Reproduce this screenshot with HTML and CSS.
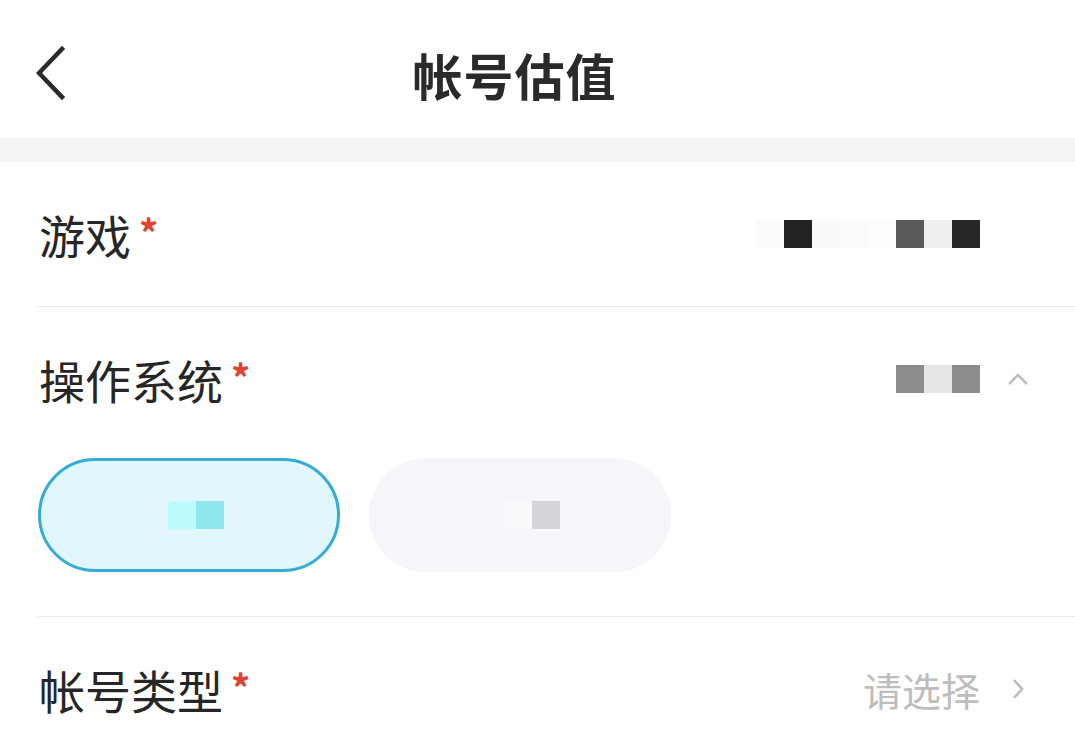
FILE: index.html
```html
<!DOCTYPE html>
<html lang="zh-CN">
<head>
    <meta name='viewport' content='width=device-width, initial-scale=1'>
    <link rel="stylesheet" href="styles.css">
    <title>帐号估值</title>
</head>
<body>
<header class="nav">
    <button class="navBack" aria-label="返回">
        <svg width="40" height="60" viewBox="0 0 40 60"><path d="M26 4 L3 28 L26 52" fill="none" stroke="#2b2b2b" stroke-width="4.5" stroke-linecap="square"/></svg>
    </button>
    <h1 class="navTitle">帐号估值</h1>
    <span></span>
</header>
<div class="band"></div>
<main>
    <section class="field">
        <div class="fieldRow">
            <span class="fieldLabel">游戏<i>*</i></span>
            <span class="fieldValue">
                <span class="mosaic">
                    <b style="background:#fbfbfb"></b><b style="background:#222"></b><b style="background:#fafafa"></b><b style="background:#fbfbfb"></b><b style="background:#fdfdfd"></b><b style="background:#595959"></b><b style="background:#efefef"></b><b style="background:#262626"></b>
                </span>
                <span class="arrow"></span>
            </span>
        </div>
    </section>
    <section class="field">
        <div class="fieldRow">
            <span class="fieldLabel">操作系统<i>*</i></span>
            <span class="fieldValue">
                <span class="mosaic">
                    <b style="background:#8c8c8c"></b><b style="background:#e6e6e6"></b><b style="background:#8c8c8c"></b>
                </span>
                <svg class="arrow" width="24" height="24" viewBox="0 0 24 24"><path d="M3 17 L12 8 L21 17" fill="none" stroke="#bdbdbd" stroke-width="2.5"/></svg>
            </span>
        </div>
        <div class="pillGroup">
            <button class="pill active"><span class="mosaic"><b style="background:#bdfcfc"></b><b style="background:#8fe6ef"></b></span></button>
            <button class="pill"><span class="mosaic"><b style="background:#f9f9fa"></b><b style="background:#d4d5d9"></b></span></button>
        </div>
    </section>
    <section class="field">
        <div class="fieldRow">
            <span class="fieldLabel">帐号类型<i>*</i></span>
            <span class="fieldValue">
                <span class="placeholder">请选择</span>
                <svg class="arrow" width="24" height="24" viewBox="0 0 24 24"><path d="M8 3 L16 12 L8 21" fill="none" stroke="#bdbdbd" stroke-width="2.5"/></svg>
            </span>
        </div>
    </section>
</main>
</body>
</html>
```

FILE: styles.css
```css
/* @formatter:off */
html, body { margin: 0; padding: 0; background: #fff; font-family: "Noto Sans CJK SC", "Noto Sans", sans-serif; color: #262626; }
button { font: inherit; border: 0; background: none; padding: 0; }

.nav { height: 138px; display: grid; grid-template-columns: 100px 1fr 146px; align-items: center; }
.navBack { display: flex; align-items: center; padding-left: 36px; height: 60px; margin-top: 12px; }
.navTitle { margin: 0; margin-top: 10px; font-size: 50px; font-weight: 700; text-align: center; color: #2a2a2a; letter-spacing: 1px; }
.band { height: 24px; background: #f3f4f6; }

.field { margin-left: 37px; border-bottom: 1px solid #ebebeb; }
.field:last-child { border-bottom: 0; }
.fieldRow { height: 144px; display: flex; align-items: center; justify-content: space-between; padding-right: 45px; }
.fieldLabel { font-size: 46px; padding-left: 2px; line-height: 1; color: #262626; }
.fieldLabel i { font-style: normal; font-weight: 700; color: #e0432f; font-size: 38px; margin-left: 8px; vertical-align: 6px; }
.fieldValue { display: flex; align-items: center; gap: 26px; }
.arrow { width: 24px; height: 24px; display: block; }

.mosaic { display: flex; }
.mosaic b { width: 28px; height: 28px; display: block; }

.pillGroup { display: flex; gap: 29px; padding: 7px 0 44px 1px; }
.pill { width: 302px; height: 114px; border-radius: 57px; background: #f5f6f9; display: flex; align-items: center; justify-content: center; box-sizing: border-box; }
.pill.active { background: #e2f7fd; border: 3px solid #35acd4; }
.pill .mosaic { margin-left: 24px; }
.pill.active .mosaic { margin-left: 14px; }

.placeholder { font-size: 39px; color: #bdbdbd; line-height: 1; }
/* @formatter:on */
```
